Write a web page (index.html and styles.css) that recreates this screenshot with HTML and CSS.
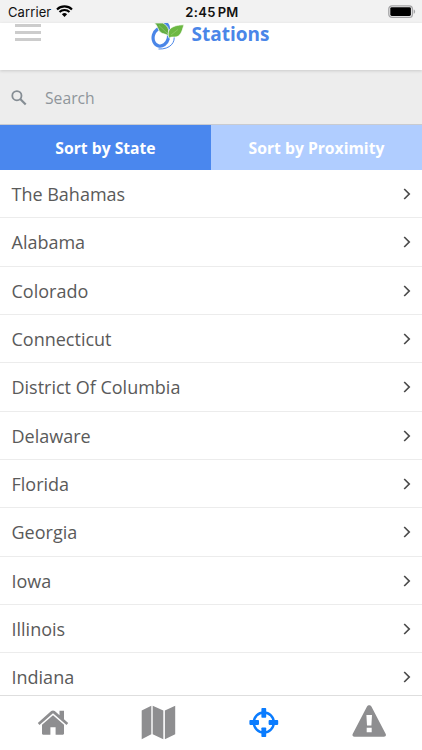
FILE: index.html
```html
<!DOCTYPE html>
<html lang="en">
<head>
    <meta charset="UTF-8">
    <meta name="viewport" content="width=device-width, initial-scale=1.0">
    <title>Stations</title>
    <link rel="stylesheet" href="styles.css">
</head>
<body>
    <svg class="sprite">
        <symbol id="chevron" viewBox="0 0 8 12">
            <path d="M1.2 1l5 5-5 5" fill="none" stroke="#4a4a4a" stroke-width="1.7"/>
        </symbol>
    </svg>

    <div class="app">
        <div class="status-bar">
            <div class="carrier">
                <span>Carrier</span>
                <svg class="wifi" width="17" height="12" viewBox="0 0 17 12">
                    <path d="M1 4.400a10.800 10.800 0 0 1 15 0M3.500 7a7.200 7.200 0 0 1 10 0" fill="none" stroke="#000" stroke-width="2.100"/>
                    <path d="M5.900 9.200a3.800 3.800 0 0 1 5.200 0L8.500 11.900z"/>
                </svg>
            </div>
            <div class="time">2:45<span>PM</span></div>
            <svg class="battery" width="28" height="14" viewBox="0 0 28 14">
                <rect x=".8" y=".8" width="23.600" height="11.600" rx="3.200" fill="none" stroke="#a5a5a7" stroke-width="1.300"/>
                <rect x="2.300" y="2.200" width="20.600" height="8.800" rx="1.400"/>
                <path d="M25.700 4.500v4.200c1.900-.5 1.900-3.700 0-4.200z" fill="#a5a5a7"/>
            </svg>
        </div>

        <header class="header">
            <button class="menu-btn"><i></i><i></i><i></i></button>
            <div class="brand">
                <svg class="logo" width="34" height="28" viewBox="0 0 34 28">
                    <path d="M22.800 12c2 7-3.300 14.500-15.300 14" fill="none" stroke="#4a86e8" stroke-width="1"/>
                    <ellipse cx="9.800" cy="14" rx="7.600" ry="9.200" transform="rotate(15 9.800 14)" fill="none" stroke="#4a86e8" stroke-width="3.200"/>
                    <path d="M11 0h6c2 2 2.300 5 1.800 9l-3-2z" fill="#4a86e8"/>
                    <path d="M3.500 0h8C15 1.500 17 4 17.500 6.500c.4 2 0 4.500.2 7-1.500-2-3.500-2.200-6-3C6.800 9 7.500 3.500 3.500 0z" fill="#62ad43" stroke="#fff" stroke-width=".7"/>
                    <path d="M33 1.800c-1.500 3.700-2.200 10.500-7.300 12-2.700.8-5.700-.6-7.700 1.500C15 7 20 2 33 1.800z" fill="#6cb843" stroke="#fff" stroke-width=".7"/>
                    <path d="M8 2.500l9.500 9M20 12l7-5.500" fill="none" stroke="#b4db94" stroke-width=".4"/>
                </svg>
                <h1>Stations</h1>
            </div>
        </header>

        <div class="search">
            <svg width="16" height="16" viewBox="0 0 16 16" fill="none" stroke="#858d94">
                <circle cx="5.900" cy="5.700" r="4.600" stroke-width="1.800"/>
                <path d="M9.200 9l5.500 5.500" stroke-width="2.200"/>
            </svg>
            <span>Search</span>
        </div>

        <div class="sort-tabs">
            <button class="sort-tab active">Sort by State</button>
            <button class="sort-tab">Sort by Proximity</button>
        </div>

        <ul class="list">
            <li>The Bahamas<svg class="chevron"><use href="#chevron"/></svg></li>
            <li>Alabama<svg class="chevron"><use href="#chevron"/></svg></li>
            <li>Colorado<svg class="chevron"><use href="#chevron"/></svg></li>
            <li>Connecticut<svg class="chevron"><use href="#chevron"/></svg></li>
            <li>District Of Columbia<svg class="chevron"><use href="#chevron"/></svg></li>
            <li>Delaware<svg class="chevron"><use href="#chevron"/></svg></li>
            <li>Florida<svg class="chevron"><use href="#chevron"/></svg></li>
            <li>Georgia<svg class="chevron"><use href="#chevron"/></svg></li>
            <li>Iowa<svg class="chevron"><use href="#chevron"/></svg></li>
            <li>Illinois<svg class="chevron"><use href="#chevron"/></svg></li>
            <li>Indiana<svg class="chevron"><use href="#chevron"/></svg></li>
        </ul>

        <nav class="tab-bar">
            <a>
                <svg width="36" height="36" viewBox="0 0 36 36" fill="#8e8e90">
                    <path d="M4.500 20L18 8.200 31.500 20l1.700-2.100-4.200-3.700V5.800h-4.500v4.400l-4.700-4.100c-1.100-.9-2.500-.9-3.600 0L2.800 17.900z"/>
                    <path d="M18 10.200L7 19.800v8.800c0 .8.500 1.200 1.200 1.200h7.200v-7.500h5.200v7.500h7.200c.8 0 1.200-.5 1.200-1.200v-8.800z"/>
                </svg>
            </a>
            <a>
                <svg width="36" height="36" viewBox="0 0 36 36" fill="#8e8e90">
                    <path d="M1.700 5.500L11.300.7v28.600l-9.600 4.900zM12.700.7L23.300 5.500v28.800l-10.600-5zM24.900 5.500L35.200.7v28.600l-10.300 5z"/>
                </svg>
            </a>
            <a>
                <svg width="36" height="36" viewBox="0 0 36 36" fill="#0a7cff">
                    <circle cx="17.800" cy="17.500" r="10" fill="none" stroke="#0a7cff" stroke-width="2.400"/>
                    <rect x="15.400" y="3.100" width="4.800" height="9.600" rx=".8"/>
                    <rect x="15.400" y="22.400" width="4.800" height="9.600" rx=".8"/>
                    <rect x="3.400" y="15.100" width="9.600" height="4.800" rx=".8"/>
                    <rect x="22.600" y="15.100" width="9.600" height="4.800" rx=".8"/>
                </svg>
            </a>
            <a>
                <svg width="36" height="36" viewBox="0 0 36 36">
                    <path d="M16 1.500c1-1.800 3.400-1.800 4.400 0l14.200 27.300c.8 1.500 0 2.900-1.700 2.900H3.500c-1.700 0-2.500-1.400-1.700-2.900z" fill="#8e8e90"/>
                    <path d="M15.400 10h5.600l-.6 10.600H16zM15.700 22.800h5v4.500h-5z" fill="#fff"/>
                </svg>
            </a>
        </nav>
    </div>
</body>
</html>
```

FILE: styles.css
```css
* {
    box-sizing: border-box;
}

body {
    margin: 0;
    font-family: "Open Sans", sans-serif;
    background: #fff;
    color: #5a5a5a;
}

button {
    border: none;
    background: none;
    padding: 0;
    font-family: inherit;
}

svg {
    display: block;
    flex: none;
}

.sprite {
    display: none;
}

.app {
    display: flex;
    flex-direction: column;
    height: 750px;
    overflow: hidden;
}

/* status bar */
.status-bar {
    display: grid;
    grid-template-columns: 1fr auto 1fr;
    align-items: center;
    flex: none;
    height: 23px;
    padding: 0 6px 0 8px;
    background: #f2f2f2;
    color: #111;
    font-family: Inter, sans-serif;
    font-size: 13px;
}

.carrier {
    display: flex;
    align-items: center;
    gap: 5px;
    letter-spacing: 0.1px;
}

.wifi {
    margin-bottom: 1px;
}

.time {
    font-weight: 600;
    letter-spacing: 0.3px;
}

.time span {
    margin-left: 2px;
}

.battery {
    justify-self: end;
}

/* header */
.header {
    display: grid;
    grid-template-columns: 1fr auto 1fr;
    align-items: start;
    flex: none;
    height: 47px;
    padding: 0 15px;
    z-index: 1;
    background: #fff;
    box-shadow: 0 1px 3px rgba(0, 0, 0, 0.15);
}

.menu-btn {
    display: flex;
    flex-direction: column;
    gap: 4px;
    width: 26px;
    padding-top: 1px;
}

.menu-btn i {
    height: 3px;
    background: #ccc;
}

.brand {
    display: flex;
    align-items: flex-start;
    gap: 7px;
    margin-right: 2px;
}

.brand h1 {
    margin: 0;
    font-size: 19px;
    line-height: 22px;
    font-weight: 700;
    color: #4a86e8;
}

/* search */
.search {
    display: flex;
    align-items: center;
    gap: 18px;
    flex: none;
    height: 55px;
    padding: 1px 11px 0;
    background: #ededed;
    border-bottom: 1px solid #c9cbd0;
    color: #8f959b;
    font-size: 15.7px;
}

/* sort tabs */
.sort-tabs {
    display: flex;
    flex: none;
    height: 45px;
}

.sort-tab {
    flex: 1;
    background: #b0cdff;
    color: #fff;
    font-size: 15.7px;
    font-weight: 700;
}

.sort-tab.active {
    background: #4a87ee;
}

/* station list */
.list {
    flex: 1;
    min-height: 0;
    margin: 0;
    padding: 0;
    list-style: none;
    overflow: hidden;
}

.list li {
    display: flex;
    align-items: center;
    justify-content: space-between;
    height: 48.33px;
    padding: 1px 11.5px 0;
    border-bottom: 1px solid #ececec;
    font-size: 18px;
}

.chevron {
    width: 8px;
    height: 12px;
}

/* bottom tab bar */
.tab-bar {
    display: flex;
    flex: none;
    height: 55px;
    border-top: 1px solid #dedede;
    background: #fff;
}

.tab-bar a {
    display: flex;
    flex: 1;
    align-items: center;
    justify-content: center;
}
```
